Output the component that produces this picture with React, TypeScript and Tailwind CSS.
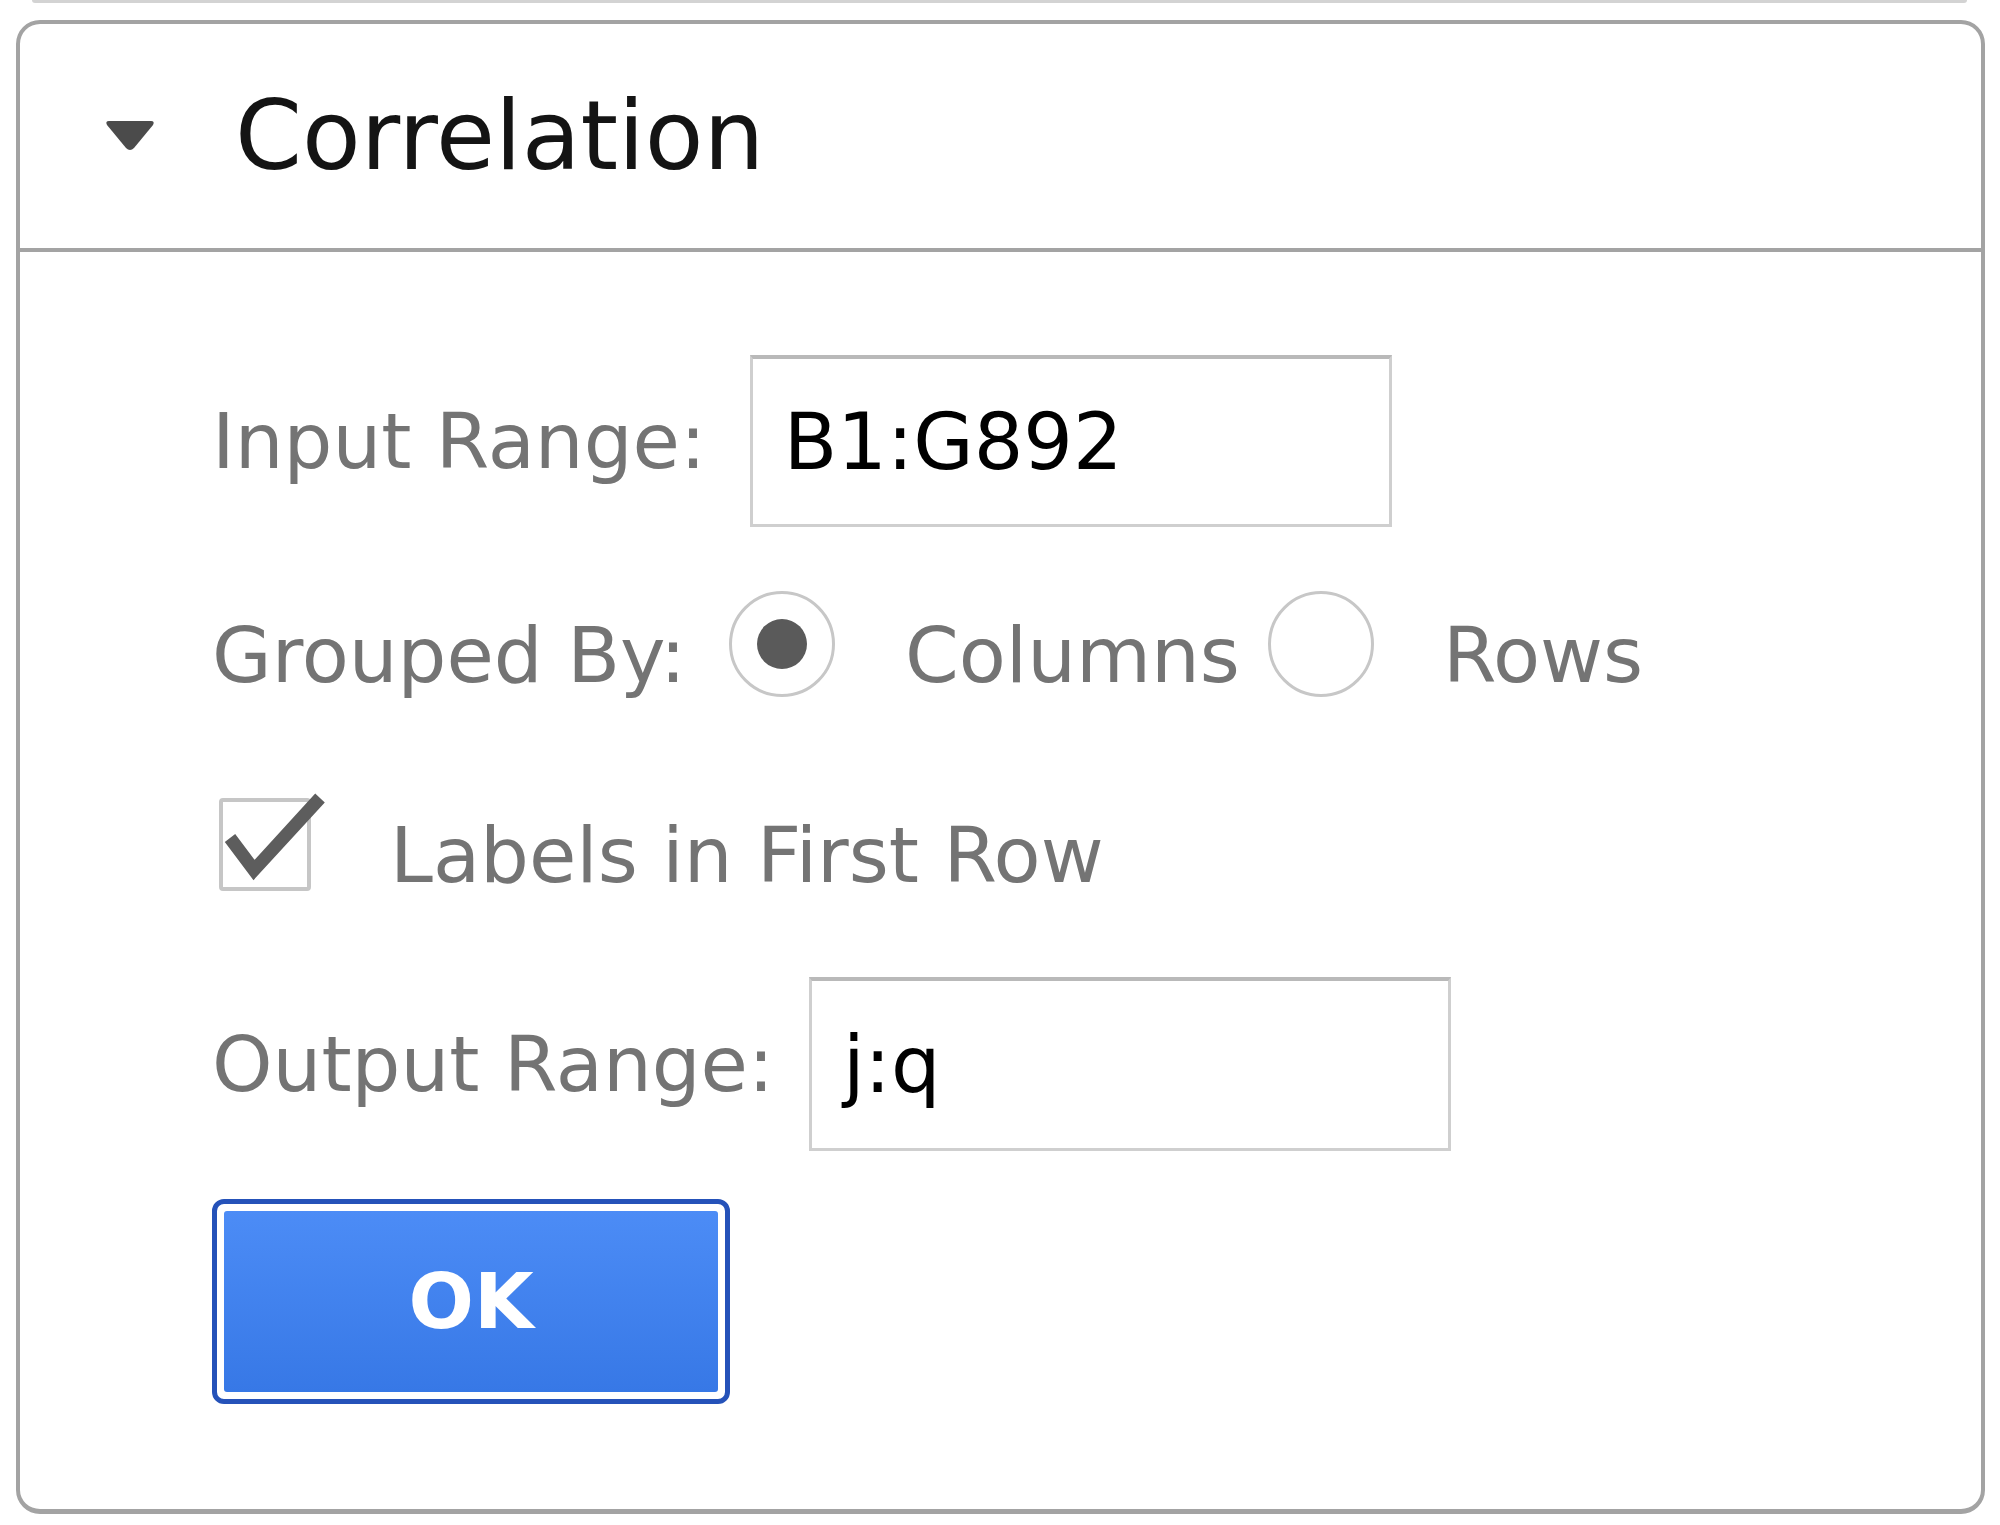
import React from 'react';

const FONT = "font-['DejaVu_Sans','Verdana',sans-serif]";

function Radio({ checked }: { checked?: boolean }) {
  return (
    <div className="mb-[22px] flex h-[106px] w-[106px] shrink-0 items-center justify-center rounded-full border-[3px] border-[#c7c7c7] bg-white">
      {checked && <div className="h-[50px] w-[50px] rounded-full bg-[#5a5a5a]" />}
    </div>
  );
}

function RangeInput({ value }: { value: string }) {
  return (
    <div className="flex h-full w-[642px] shrink-0 items-center border-[3px] border-[#cfcfcf] border-t-[4px] border-t-[#b9b9b9] bg-white pl-[31px] text-[78px] leading-none text-black">
      {value}
    </div>
  );
}

export default function App() {
  return (
    <div className={`min-h-[1525px] w-[2000px] bg-white ${FONT}`}>
      {/* bottom edge of the panel above */}
      <div className="ml-[32px] h-[3px] w-[1935px] rounded-b-[3px] bg-[#d3d3d3]" />

      <div className="ml-[16px] mt-[17px] h-[1494px] w-[1969px] rounded-[24px] border-[4px] border-b-[5px] border-[#a3a3a3] bg-white">
        {/* Header */}
        <div className="flex h-[228px] items-center border-b-[4px] border-[#a3a3a3] pl-[84px]">
          <svg width="52" height="34" viewBox="0 0 52 34" className="shrink-0">
            <path d="M5 2 L47 2 Q51 2 49 6 L30 29 Q26 33 22 29 L3 6 Q1 2 5 2 Z" fill="#4b4b4b" />
          </svg>
          <span className="ml-[79px] text-[96px] leading-none text-[#141414]">Correlation</span>
        </div>

        {/* Body */}
        <div className="flex flex-col pl-[192px] text-[77px] leading-none text-[#747474]">
          <div className="mt-[103px] flex h-[172px] items-center">
            <span>Input Range:</span>
            <div className="ml-[44px] h-full">
              <RangeInput value="B1:G892" />
            </div>
          </div>

          <div className="mt-[64px] flex h-[128px] items-center">
            <span>Grouped By:</span>
            <div className="ml-[43px]">
              <Radio checked />
            </div>
            <span className="ml-[70px]">Columns</span>
            <div className="ml-[28px]">
              <Radio />
            </div>
            <span className="ml-[69px]">Rows</span>
          </div>

          <div className="mt-[79px] flex h-[115px] items-center">
            <div className="relative mb-[22px] ml-[7px] h-[93px] w-[92px] shrink-0 rounded-[4px] border-[4px] border-[#c6c6c6]">
              <svg
                className="absolute left-[-4px] top-[-12px]"
                width="112"
                height="100"
                viewBox="0 0 112 100"
              >
                <polyline
                  points="11,48 35,80 101,8"
                  fill="none"
                  stroke="#5d5d5d"
                  strokeWidth="13"
                  strokeLinejoin="miter"
                />
              </svg>
            </div>
            <span className="ml-[79px]">Labels in First Row</span>
          </div>

          <div className="mt-[64px] flex h-[174px] items-center">
            <span>Output Range:</span>
            <div className="ml-[35px] h-full">
              <RangeInput value="j:q" />
            </div>
          </div>

          <div className="mt-[48px] flex">
            <button className="flex h-[205px] w-[518px] items-center justify-center rounded-[12px] border-[5px] border-[#2552b9] bg-white p-[7px]">
              <span className="flex h-full w-full items-center justify-center rounded-[3px] bg-linear-to-b from-[#4c8cf6] to-[#3778e6] text-[77px] font-bold leading-none text-white">
                OK
              </span>
            </button>
          </div>
        </div>
      </div>
    </div>
  );
}
